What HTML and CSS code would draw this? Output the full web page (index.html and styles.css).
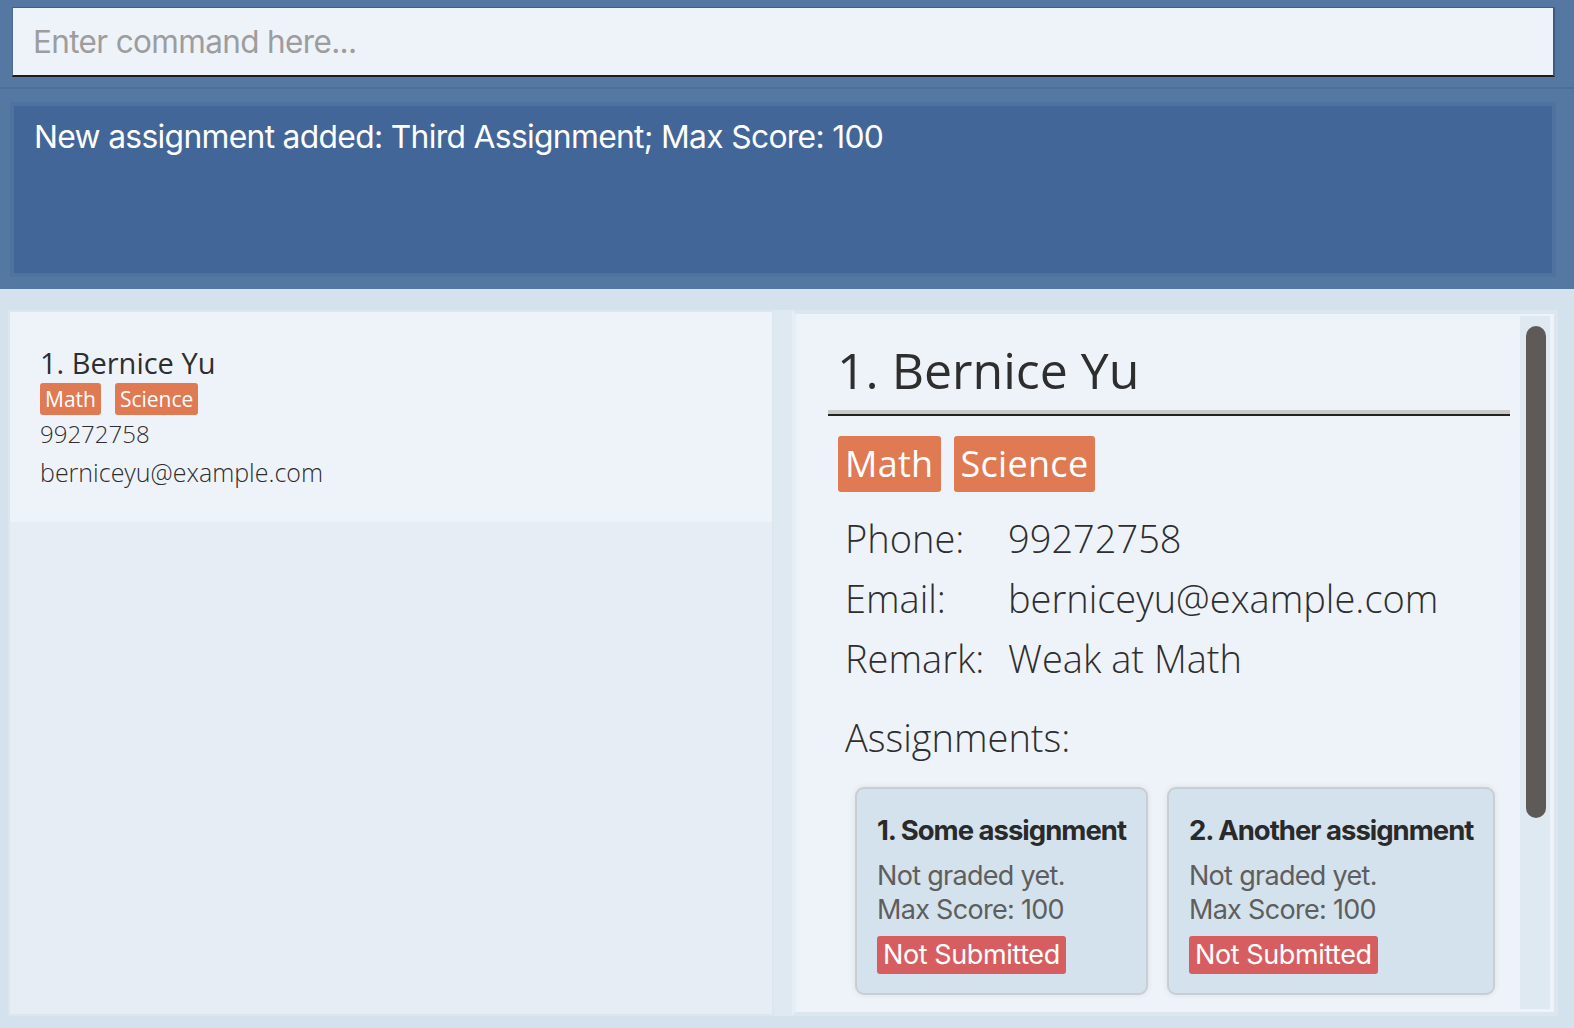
FILE: index.html
```html
<!DOCTYPE html>
<html lang="en">
<head>
<meta charset="utf-8">
<title>Address Book</title>
<link rel="stylesheet" href="styles.css">
</head>
<body>
<div class="app">
  <header class="top">
    <div class="command-box">
      <span class="placeholder">Enter command here...</span>
    </div>
    <div class="result-area">
      <div class="result-box">New assignment added: Third Assignment; Max Score: 100</div>
    </div>
  </header>
  <main class="main">
    <section class="left">
      <div class="cell">
        <div class="cell-name">1. Bernice Yu</div>
        <div class="tags">
          <span class="tag">Math</span>
          <span class="tag">Science</span>
        </div>
        <div class="cell-phone">99272758</div>
        <div class="cell-email">berniceyu@example.com</div>
      </div>
    </section>
    <div class="divider"></div>
    <section class="right">
      <div class="detail">
        <div class="name-rule">
          <h1 class="detail-name">1. Bernice Yu</h1>
        </div>
        <div class="big-tags">
          <span class="big-tag">Math</span>
          <span class="big-tag">Science</span>
        </div>
        <div class="rows">
          <div class="row"><span class="label">Phone:</span><span class="value">99272758</span></div>
          <div class="row"><span class="label">Email:</span><span class="value">berniceyu@example.com</span></div>
          <div class="row"><span class="label">Remark:</span><span class="value">Weak at Math</span></div>
        </div>
        <div class="assign-head">Assignments:</div>
        <div class="cards">
          <div class="card">
            <div class="card-title">1. Some assignment</div>
            <div class="card-line first">Not graded yet.</div>
            <div class="card-line">Max Score: 100</div>
            <span class="badge">Not Submitted</span>
          </div>
          <div class="card">
            <div class="card-title">2. Another assignment</div>
            <div class="card-line first">Not graded yet.</div>
            <div class="card-line">Max Score: 100</div>
            <span class="badge">Not Submitted</span>
          </div>
        </div>
      </div>
      <div class="track"><div class="thumb"></div></div>
    </section>
  </main>
</div>
</body>
</html>
```

FILE: styles.css
```css
* { box-sizing: border-box; }
html, body { margin: 0; padding: 0; }
body {
  width: 1574px;
  height: 1028px;
  overflow: hidden;
  background: #d4e2ed;
  font-family: "Open Sans", "Noto Sans", sans-serif;
  color: #333;
}
.app { display: flex; flex-direction: column; height: 1028px; }

.top {
  height: 289px;
  background: #5478a2;
  display: flex;
  flex-direction: column;
  padding-top: 7px;
}
.command-box {
  margin: 0 19px 0 12px;
  height: 70px;
  background: #eef3fa;
  border-top: 1px solid #3f5f88;
  border-left: 1px solid #4a6b95;
  border-right: 2px solid #3d5b82;
  border-bottom: 2px solid #1d1d1d;
  display: flex;
  align-items: center;
  padding-left: 20px;
}
.placeholder {
  font-family: "Inter", sans-serif;
  font-size: 31.5px;
  letter-spacing: -0.65px;
  color: #9d9d9d;
}
.result-area {
  margin-top: 10px;
  border-top: 2px solid #4d719d;
  padding: 13px 18px 12px 10px;
  flex: 1;
  display: flex;
}
.result-box {
  flex: 1;
  background: #426697;
  border: 4px solid #4e73a0;
  padding: 11px 17px 10px 20px;
  font-family: "Inter", sans-serif;
  font-size: 31.8px;
  line-height: 40px;
  letter-spacing: -0.68px;
  color: #ffffff;
}

.main {
  flex: 1;
  display: flex;
  padding: 21px 16px 12px 8px;
}
.left {
  width: 766px;
  border: 2px solid #dce6ef;
  background: #e6edf5;
}
.cell {
  background: #eef3fa;
  height: 210px;
  padding: 33px 30px 0 30px;
}
.cell-name {
  font-size: 29px;
  line-height: 36px;
  color: #2e2e2e;
}
.tags { display: flex; gap: 14px; margin-top: 2px; }
.tag {
  background: #df7a53;
  color: #fff;
  font-size: 21px;
  height: 32px;
  line-height: 32px;
  padding: 0 5px;
  border-radius: 3px;
}
.cell-phone {
  font-size: 24px;
  font-weight: 300;
  line-height: 34px;
  margin-top: 2px;
  color: #2e2e2e;
}
.cell-email {
  font-size: 25px;
  font-weight: 300;
  line-height: 38px;
  margin-top: 2px;
  color: #2e2e2e;
}

.divider {
  width: 18px;
  background: #dfe9f2;
}
.right {
  width: 766px;
  border: 4px solid #dce6ef;
  border-left-color: #e5edf5;
  background: #eef3fa;
  display: flex;
}
.detail {
  flex: 1;
  padding: 0 10px 0 32px;
  overflow: hidden;
}
.name-rule {
  margin-top: 26px;
  border-bottom: 2px solid #222;
}
.detail-name {
  margin: 0;
  font-weight: 400;
  font-size: 50px;
  line-height: 60px;
  padding: 0 0 10px 9px;
  border-bottom: 4px solid #c9c9c9;
  color: #2e2e2e;
}
.big-tags { display: flex; gap: 13px; margin: 20px 0 0 10px; }
.big-tag {
  background: #df7a53;
  color: #fff;
  font-size: 36px;
  height: 56px;
  line-height: 56px;
  padding: 0 7px;
  border-radius: 3px;
  letter-spacing: 0.3px;
}
.rows { margin: 16px 0 0 17px; }
.row {
  display: flex;
  font-size: 38px;
  font-weight: 300;
  line-height: 60px;
  color: #2e2e2e;
}
.label { width: 163px; }
.assign-head {
  margin: 19px 0 0 17px;
  font-size: 38px;
  font-weight: 300;
  line-height: 60px;
  color: #2e2e2e;
}
.cards {
  display: flex;
  gap: 19px;
  margin: 20px 0 0 27px;
  align-items: flex-start;
}
.card {
  background: #d4e2ed;
  border: 2px solid #c9ced3;
  border-radius: 9px;
  box-shadow: 0 0 6px rgba(0, 0, 0, 0.08);
  padding: 23px 20px 19px 20px;
  height: 208px;
  font-family: "Inter", sans-serif;
}
.card-title {
  font-size: 27.5px;
  font-weight: 700;
  line-height: 36px;
  letter-spacing: -1px;
  color: #2a2a2a;
}
.card-line {
  font-size: 27px;
  line-height: 34px;
  letter-spacing: -0.7px;
  color: #5e5e5e;
}
.card-line.first { margin-top: 11px; }
.badge {
  display: inline-block;
  margin-top: 9px;
  background: #d65e60;
  color: #fff;
  font-size: 27px;
  line-height: 38px;
  height: 38px;
  letter-spacing: -0.4px;
  padding: 0 6px;
  border-radius: 3px;
}

.track {
  width: 34px;
  padding: 2px 4px 3px 0;
  display: flex;
  background: linear-gradient(to right, #dfe9f2 0, #dfe9f2 30px, #eef3fa 30px);
  background-clip: content-box;
}
.thumb {
  width: 20px;
  height: 492px;
  margin: 10px 0 0 6px;
  background: #5e5a57;
  border-radius: 10px;
}
```
